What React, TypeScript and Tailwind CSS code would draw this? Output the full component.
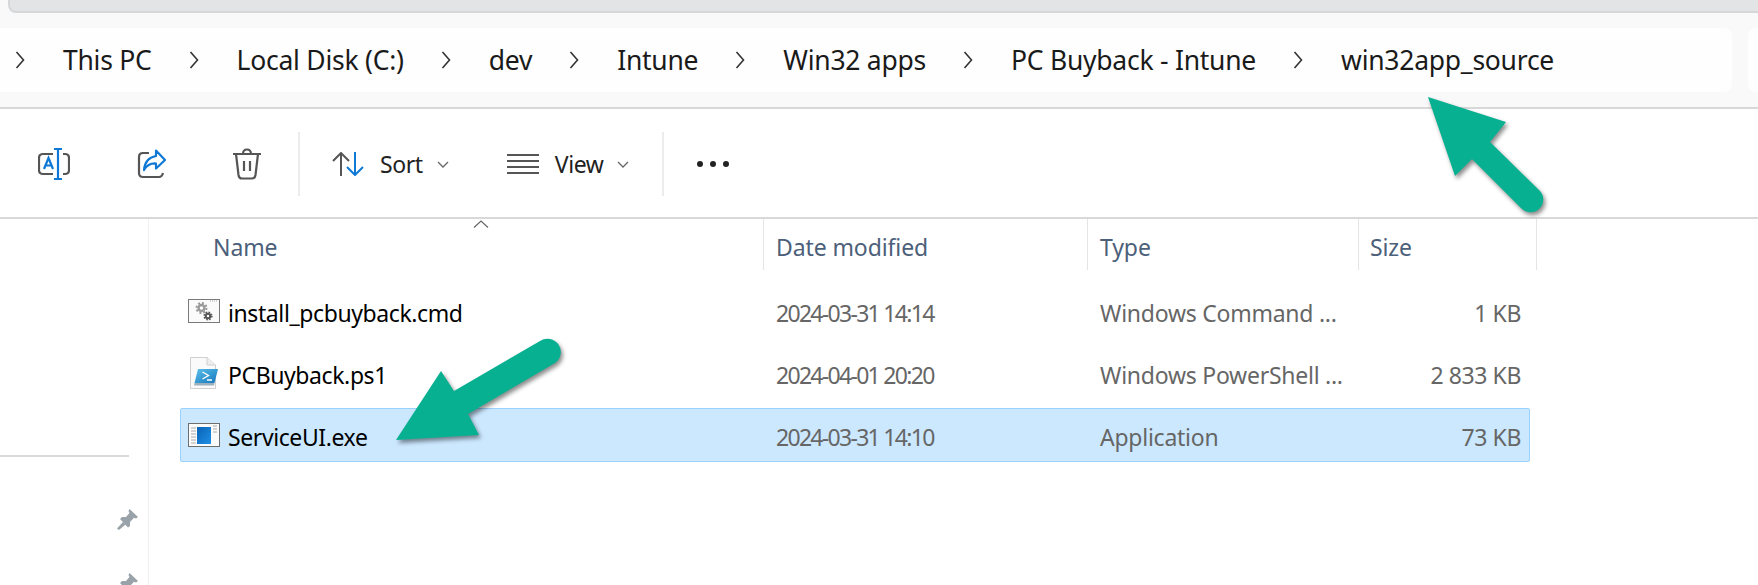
const crumbs = ["This PC", "Local Disk (C:)", "dev", "Intune", "Win32 apps", "PC Buyback - Intune", "win32app_source"];

function Chevron() {
  return (
    <svg width="10" height="20" viewBox="0 0 10 20" fill="none" stroke="#333" strokeWidth="1.6" className="shrink-0">
      <path d="M1.5 2 L8.5 10 L1.5 18" />
    </svg>
  );
}

function SmallChevron() {
  return (
    <svg width="12" height="7" viewBox="0 0 12 7" fill="none" stroke="#666" strokeWidth="1.3" className="shrink-0">
      <path d="M1 1 L6 6 L11 1" />
    </svg>
  );
}

function RenameIcon() {
  return (
    <svg width="32" height="32" viewBox="0 0 32 32" fill="none" strokeWidth="2.2">
      <path d="M15 6 H5 Q1 6 1 10 V22 Q1 26 5 26 H15 M25 6 H27 Q31 6 31 10 V22 Q31 26 27 26 H25" stroke="#555" />
      <path d="M20 1 V31 M16 1 H24 M16 31 H24" stroke="#0f78d4" />
      <path d="M6 21 L10.5 10 L15 21 M7.5 17.5 H13.5" stroke="#0f78d4" />
    </svg>
  );
}

function ShareIcon() {
  return (
    <svg width="30" height="30" viewBox="0 0 30 30" fill="none" strokeWidth="2.2">
      <path d="M12 4 H6 Q2 4 2 8 V24 Q2 28 6 28 H22 Q25 28 26 24" stroke="#555" />
      <path d="M19 1.5 L28 11 L19 19.5 V14.5 Q11 14 7 21 Q8 9 19 7 Z" stroke="#0f78d4" strokeLinejoin="round" />
    </svg>
  );
}

function TrashIcon() {
  return (
    <svg width="30" height="32" viewBox="0 0 30 32" fill="none" stroke="#555" strokeWidth="2.2">
      <path d="M1 6 H29 M11 6 Q11 1.5 15 1.5 Q19 1.5 19 6" />
      <path d="M4 6 L6.5 27 Q7 30.5 10 30.5 H20 Q23 30.5 23.5 27 L26 6" />
      <path d="M12 13 V23 M18 13 V23" />
    </svg>
  );
}

function SortIcon() {
  return (
    <svg width="32" height="24" viewBox="0 0 32 24" fill="none" strokeWidth="2">
      <path d="M9 24 V1 M1 9 L9 1 L17 9" stroke="#555" />
      <path d="M23 0 V23 M15 15 L23 23 L31 15" stroke="#0f78d4" />
    </svg>
  );
}

function ViewIcon() {
  return (
    <svg width="32" height="20" viewBox="0 0 32 20" fill="none" stroke="#555" strokeWidth="2">
      <path d="M0 1 H32 M0 7 H32 M0 13 H32 M0 19 H32" />
    </svg>
  );
}

function CmdIcon() {
  return (
    <svg width="32" height="24" viewBox="0 0 32 24" className="shrink-0">
      <rect x="0.5" y="0.5" width="31" height="23" fill="#fbfbfb" stroke="#7a7a7a" />
      <path d="M22 2 H30" stroke="#aaa" strokeDasharray="1 1" />
      <circle cx="13.5" cy="9" r="3" fill="none" stroke="#9a9a9a" strokeWidth="2.4" />
      <circle cx="13.5" cy="9" r="5" fill="none" stroke="#9a9a9a" strokeWidth="2" strokeDasharray="2 1.9" />
      <circle cx="20" cy="17" r="2.2" fill="none" stroke="#555" strokeWidth="2" />
      <circle cx="20" cy="17" r="3.8" fill="none" stroke="#555" strokeWidth="1.6" strokeDasharray="1.6 1.4" />
    </svg>
  );
}

function PsIcon() {
  return (
    <svg width="30" height="32" viewBox="0 0 30 32" className="shrink-0">
      <defs>
        <linearGradient id="ps" x1="0" y1="0" x2="1" y2="1">
          <stop offset="0" stopColor="#5cc0ea" />
          <stop offset="1" stopColor="#1477bd" />
        </linearGradient>
      </defs>
      <path d="M1.5 0.5 H18 L26.5 8 V31.5 H1.5 Z" fill="#fafafa" stroke="#cfcfcf" />
      <path d="M18 0.5 V8 H26.5" fill="#eee" stroke="#cfcfcf" />
      <path d="M9 12 H29 L25.5 26 H5.5 Z" fill="url(#ps)" />
      <path d="M5.5 26 H25.5 L25 28.5 H5 Z" fill="#9db0bc" />
      <path d="M13.5 15 L19.5 18.5 L13.5 22 M18 23 H23" fill="none" stroke="#fff" strokeWidth="1.4" />
    </svg>
  );
}

function ExeIcon() {
  return (
    <svg width="32" height="24" viewBox="0 0 32 24" className="shrink-0">
      <defs>
        <linearGradient id="exe" x1="0" y1="0" x2="1" y2="1">
          <stop offset="0" stopColor="#0a62b4" />
          <stop offset="1" stopColor="#1e90e6" />
        </linearGradient>
      </defs>
      <rect x="0.5" y="0.5" width="31" height="23" fill="#fbfbfb" stroke="#6e6e6e" />
      <path d="M3 5 H8 M3 8 H8 M3 11 H8 M3 14 H8 M3 17 H8 M3 20 H8 M25 3 H29 M25 6 H29 M25 9 H29" stroke="#aaa" />
      <rect x="9" y="4" width="14" height="17" fill="url(#exe)" />
    </svg>
  );
}

function Pin() {
  return (
    <svg width="21" height="21" viewBox="0 0 21 21" fill="#98a2a8">
      <path d="M12.5 0 L21 8 L19 9.5 L17 8.8 L13 13 L13 17 L11 18.5 L3 10 L5 8 L9 8 L12.5 4 L11.5 2 Z" />
      <path d="M6 13 L8.5 15.5 L2 21 L0 19.5 Z" />
    </svg>
  );
}

const files = [
  { name: "install_pcbuyback.cmd", date: "2024-03-31 14:14", type: "Windows Command ...", size: "1 KB", icon: <CmdIcon /> },
  { name: "PCBuyback.ps1", date: "2024-04-01 20:20", type: "Windows PowerShell ...", size: "2 833 KB", icon: <PsIcon /> },
  { name: "ServiceUI.exe", date: "2024-03-31 14:10", type: "Application", size: "73 KB", icon: <ExeIcon />, selected: true },
];

export default function App() {
  return (
    <div className="relative w-[1758px] h-[585px] overflow-hidden bg-white font-['Noto_Sans',sans-serif]">
      {/* address bar */}
      <div className="h-[109px] bg-[#f9f9f9] border-b-2 border-[#d8d8d8]">
        <div className="h-[13px] ml-[8px] bg-[#e3e4e6] border-l-2 border-b-2 border-[#d6d7d9] rounded-bl-lg" />
        <div className="flex gap-[16px] mt-[15px] h-[64px]">
          <div className="w-[1732px] bg-[#fefefe] rounded-r-lg flex items-center pl-[15px] gap-[37px] text-[#1a1a1a] text-[26.5px] tracking-[-0.25px]">
            {crumbs.map((c) => (
              <div key={c} className="flex items-center gap-[38px]">
                <Chevron />
                <span className="whitespace-nowrap pt-[2px]">{c}</span>
              </div>
            ))}
          </div>
          <div className="flex-1 bg-[#fefefe] rounded-l-lg" />
        </div>
      </div>

      {/* toolbar */}
      <div className="h-[110px] border-b-2 border-[#d8d8d8] flex items-center pl-[38px] pt-[2px] text-[#222] text-[23px] tracking-[-0.4px]">
        <RenameIcon />
        <div className="ml-[67px]"><ShareIcon /></div>
        <div className="ml-[65px]"><TrashIcon /></div>
        <div className="ml-[36px] w-[2px] h-[64px] bg-[#ececec]" />
        <div className="ml-[32px] flex items-center">
          <SortIcon />
          <span className="ml-[16px]">Sort</span>
          <div className="ml-[14px]"><SmallChevron /></div>
        </div>
        <div className="ml-[58px] flex items-center">
          <ViewIcon />
          <span className="ml-[16px]">View</span>
          <div className="ml-[14px]"><SmallChevron /></div>
        </div>
        <div className="ml-[33px] w-[2px] h-[64px] bg-[#ececec]" />
        <div className="ml-[33px] flex gap-[7px]">
          <div className="w-[6px] h-[6px] rounded-full bg-[#222]" />
          <div className="w-[6px] h-[6px] rounded-full bg-[#222]" />
          <div className="w-[6px] h-[6px] rounded-full bg-[#222]" />
        </div>
      </div>

      <div className="flex">
        {/* nav pane */}
        <div className="w-[149px] h-[366px] border-r border-[#f0f0f0] pt-[236px] shrink-0">
          <div className="w-[129px] h-[2px] bg-[#d9d9d9]" />
          <div className="flex flex-col gap-[43px] pl-[117px] pt-[52px]">
            <Pin />
            <Pin />
          </div>
        </div>

        {/* file list */}
        <div className="relative flex-1 text-[23px] tracking-[-0.4px]">
          <svg width="16" height="8" viewBox="0 0 16 8" fill="none" stroke="#666" strokeWidth="1.2" className="absolute left-[324px] top-[1px]">
            <path d="M1 7.5 L8 1 L15 7.5" />
          </svg>
          <div className="grid grid-cols-[614px_324px_271px_179px] h-[51px] text-[#4c607a] tracking-[-0.1px]">
            <div className="pl-[64px] pt-[6px] flex items-center">Name</div>
            <div className="border-l border-[#e5e5e5] pl-[12px] pt-[6px] flex items-center">Date modified</div>
            <div className="border-l border-[#e5e5e5] pl-[12px] pt-[6px] flex items-center">Type</div>
            <div className="border-r border-l border-[#e5e5e5] pl-[11px] pt-[6px] flex items-center">Size</div>
          </div>
          <div className="flex flex-col gap-[8px] pt-[14px] ml-[31px] w-[1350px]">
            {files.map((f) => (
              <div
                key={f.name}
                className={`grid grid-cols-[595px_324px_272px_149px] items-center h-[54px] border rounded-xs ${
                  f.selected ? "bg-[#cce8ff] border-[#99d1ff]" : "border-transparent"
                }`}
              >
                <div className="flex items-center pl-[7px] text-black">
                  <div className="w-[32px] flex justify-center shrink-0">{f.icon}</div>
                  <span className="ml-[8px] pt-[4px] whitespace-nowrap">{f.name}</span>
                </div>
                <div className="text-[#666] pt-[4px] tracking-[-1.7px]">{f.date}</div>
                <div className="text-[#666] pt-[4px] tracking-[-0.25px] whitespace-nowrap">{f.type}</div>
                <div className="text-[#666] pt-[4px] text-right whitespace-nowrap">{f.size}</div>
              </div>
            ))}
          </div>
        </div>
      </div>

      {/* annotation arrows */}
      <svg width="1758" height="585" viewBox="0 0 1758 585" className="absolute inset-0 pointer-events-none drop-shadow-[2px_3px_2px_rgba(0,0,0,0.45)]">
        <path
          d="M1428 97 L1506 122 L1490 142 L1540 191 A12.5 12.5 0 0 1 1521 208 L1472 159 L1455 176 Z"
          fill="#08b092"
        />
        <path
          d="M396 440 L441 371 L454 391 L540 341 A13 13 0 0 1 555 363 L468 414 L479 435 Z"
          fill="#08b092"
        />
      </svg>
    </div>
  );
}
